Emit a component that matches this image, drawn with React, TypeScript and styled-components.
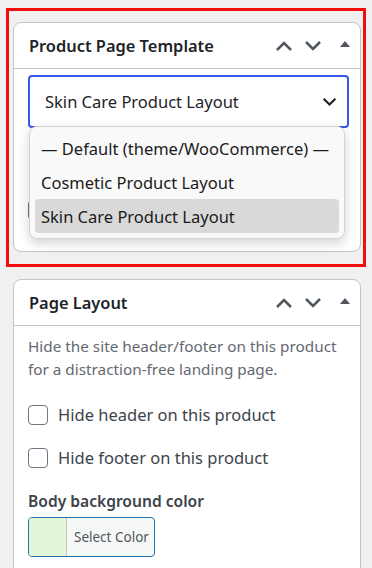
import React from "react";
import styled, { createGlobalStyle } from "styled-components";

const GlobalStyle = createGlobalStyle`
  html, body {
    margin: 0;
    padding: 0;
    background: #f0f0f1;
    font-family: "Noto Sans", "Open Sans", sans-serif;
    color: #1d2327;
  }
  * { box-sizing: border-box; }
`;

const templateOptions = [
  "— Default (theme/WooCommerce) —",
  "Cosmetic Product Layout",
  "Skin Care Product Layout",
];

function ChevronUp() {
  return (
    <svg width="18" height="12" viewBox="0 0 18 12">
      <path d="M2 10 L9 3 L16 10" fill="none" stroke="#50575e" strokeWidth="2.6" />
    </svg>
  );
}

function ChevronDown({ color = "#50575e", w = 18 }: { color?: string; w?: number }) {
  return (
    <svg width={w} height={(w * 12) / 18} viewBox="0 0 18 12">
      <path d="M2 2 L9 9 L16 2" fill="none" stroke={color} strokeWidth="2.6" />
    </svg>
  );
}

function Triangle() {
  return (
    <svg width="10" height="6" viewBox="0 0 10 6">
      <path d="M0 6 L5 0 L10 6 Z" fill="#50575e" />
    </svg>
  );
}

function PanelControls() {
  return (
    <HeaderActions>
      <IconButton>
        <ChevronUp />
      </IconButton>
      <IconButton>
        <ChevronDown />
      </IconButton>
      <ToggleButton>
        <Triangle />
      </ToggleButton>
    </HeaderActions>
  );
}

export default function App() {
  return (
    <>
      <GlobalStyle />
      <Page>
        <Highlight>
          <Panel>
            <PanelHeader>
              <PanelTitle>Product Page Template</PanelTitle>
              <PanelControls />
            </PanelHeader>
            <PanelBody $tight>
              <SelectWrap>
                <SelectBox>
                  <span>Skin Care Product Layout</span>
                  <ChevronDown color="#1d2327" w={15} />
                </SelectBox>
                <OptionList>
                  {templateOptions.map((opt, i) => (
                    <OptionItem key={opt} $active={i === templateOptions.length - 1}>
                      {opt}
                    </OptionItem>
                  ))}
                </OptionList>
              </SelectWrap>
              <HiddenCheck>
                <CheckBox />
              </HiddenCheck>
            </PanelBody>
          </Panel>
        </Highlight>

        <Panel $gap>
          <PanelHeader>
            <PanelTitle>Page Layout</PanelTitle>
            <PanelControls />
          </PanelHeader>
          <PanelBody>
            <Description>
              Hide the site header/footer on this product for a distraction-free landing page.
            </Description>
            <CheckRow>
              <CheckBox />
              <CheckLabel>Hide header on this product</CheckLabel>
            </CheckRow>
            <CheckRow>
              <CheckBox />
              <CheckLabel>Hide footer on this product</CheckLabel>
            </CheckRow>
            <FieldLabel>Body background color</FieldLabel>
            <ColorButton>
              <Swatch $color="#e3f6d8" />
              <ColorText>Select Color</ColorText>
            </ColorButton>
          </PanelBody>
        </Panel>
      </Page>
    </>
  );
}

const Page = styled.div`
  padding: 8px 11px 0 13px;
  display: flex;
  flex-direction: column;
`;

const Highlight = styled.div`
  margin: 0 -5px 0 -7px;
  padding: 11px 2px 12px 4px;
  border: 3px solid #f20d0d;
`;

const Panel = styled.section<{ $gap?: boolean }>`
  background: #fff;
  border: 1px solid #c3c4c7;
  border-radius: 8px;
  margin-top: ${(p) => (p.$gap ? "12px" : "0")};
`;

const PanelHeader = styled.div`
  height: 46px;
  display: flex;
  align-items: center;
  justify-content: space-between;
  padding: 0 8px 0 15px;
  border-bottom: 1px solid #c3c4c7;
`;

const PanelTitle = styled.h2`
  margin: 0;
  font-size: 16.4px;
  font-weight: 600;
  color: #1d2327;
`;

const HeaderActions = styled.div`
  display: flex;
  align-items: center;
  gap: 11px;
`;

const IconButton = styled.span`
  display: flex;
  align-items: center;
  justify-content: center;
  width: 18px;
  height: 20px;
`;

const ToggleButton = styled(IconButton)`
  width: 14px;
  margin-left: 5px;
  padding-bottom: 4px;
`;

const PanelBody = styled.div<{ $tight?: boolean }>`
  padding: ${(p) => (p.$tight ? "6px 11px 31px 14px" : "9px 11px 20px 14px")};
  display: flex;
  flex-direction: column;
`;

const SelectWrap = styled.div`
  position: relative;
`;

const SelectBox = styled.div`
  height: 53px;
  border: 2px solid #3858e9;
  border-radius: 4px;
  display: flex;
  align-items: center;
  justify-content: space-between;
  padding: 0 10px 0 15px;
  font-size: 16.5px;
  color: #1d2327;
  background: #fff;
`;

const OptionList = styled.ul`
  position: absolute;
  z-index: 2;
  top: 51px;
  left: 1px;
  width: 316px;
  margin: 0;
  padding: 4px 5px 5px;
  list-style: none;
  background: #f9f9f9;
  border: 1px solid #d4d4d4;
  border-radius: 8px;
  box-shadow: 0 4px 12px rgba(0, 0, 0, 0.18);
`;

const OptionItem = styled.li<{ $active?: boolean }>`
  height: 34px;
  display: flex;
  align-items: center;
  padding-left: 6px;
  border-radius: 4px;
  font-size: 16.5px;
  color: #1b1b1b;
  background: ${(p) => (p.$active ? "#d9d9d9" : "transparent")};
`;

const HiddenCheck = styled.div`
  margin-top: 72px;
  display: flex;
`;

const Description = styled.p`
  margin: 0;
  font-size: 15.3px;
  line-height: 23px;
  color: #646970;
  & + * {
    margin-top: 22px;
  }
`;

const CheckRow = styled.label`
  display: flex;
  align-items: center;
  gap: 10px;
  & + & {
    margin-top: 20px;
  }
`;

const CheckBox = styled.span`
  width: 20px;
  height: 20px;
  flex: none;
  border: 1px solid #6c7781;
  border-radius: 4px;
  background: #fff;
`;

const CheckLabel = styled.span`
  font-size: 16.5px;
  color: #3c434a;
`;

const FieldLabel = styled.div`
  margin-top: 21px;
  font-size: 15.6px;
  font-weight: 600;
  color: #3c434a;
`;

const ColorButton = styled.div`
  margin-top: 5px;
  width: 127px;
  height: 40px;
  display: flex;
  border: 1px solid #2271b1;
  border-radius: 4px;
  overflow: hidden;
  background: #f6f7f7;
`;

const Swatch = styled.span<{ $color: string }>`
  width: 38px;
  flex: none;
  background: ${(p) => p.$color};
  border-right: 1px solid #c3c4c7;
`;

const ColorText = styled.span`
  display: flex;
  align-items: center;
  padding-left: 7px;
  font-size: 13.5px;
  color: #50575e;
`;
